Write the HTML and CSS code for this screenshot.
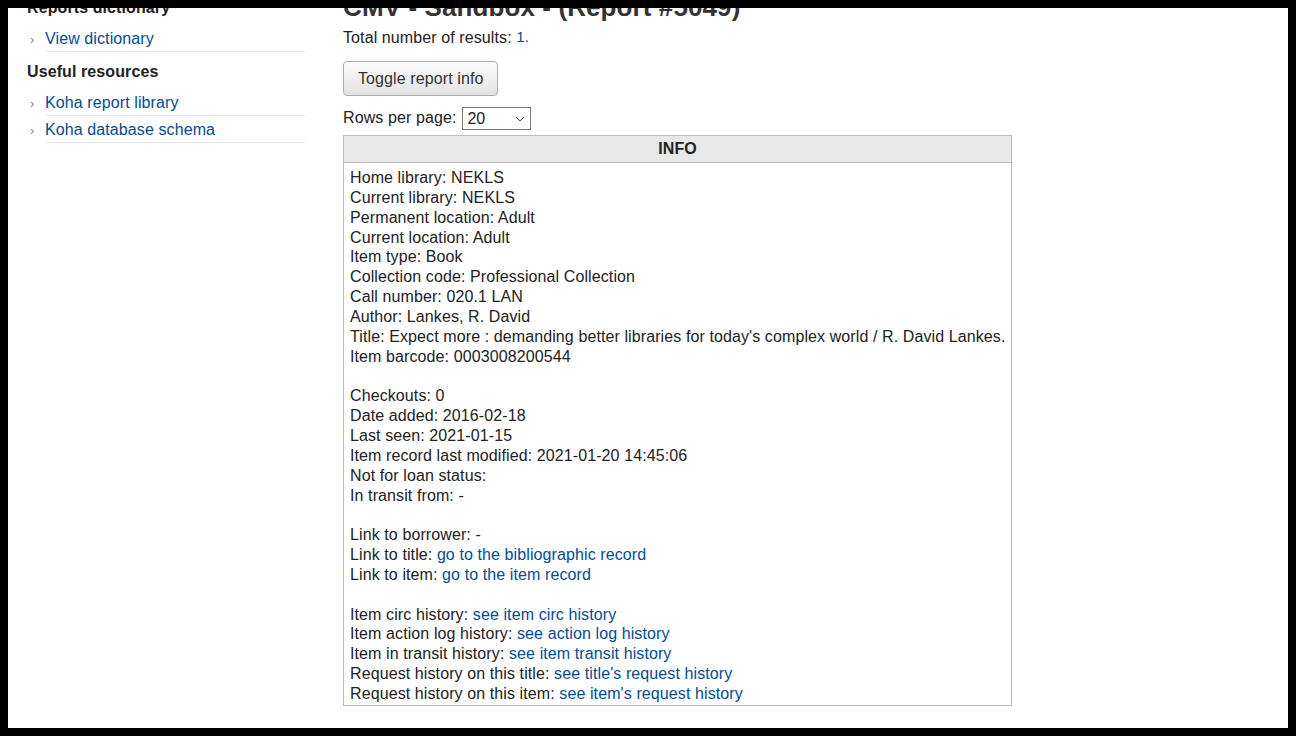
FILE: index.html
```html
<!DOCTYPE html>
<html>
<head>
<meta charset="utf-8">
<link rel="stylesheet" href="styles.css">
</head>
<body>
<div class="viewport">
  <div class="page">
    <aside class="sidebar">
      <h5 class="side-head first">Reports dictionary</h5>
      <ul class="side-list">
        <li><a href="#">View dictionary</a></li>
      </ul>
      <h5 class="side-head">Useful resources</h5>
      <ul class="side-list">
        <li><a href="#">Koha report library</a></li>
        <li><a href="#">Koha database schema</a></li>
      </ul>
    </aside>
    <main class="main">
      <h1 class="title">CMV - Sandbox - (Report #5049)</h1>
      <p class="total">Total number of results: <span class="count">1.</span></p>
      <button class="toggle">Toggle report info</button>
      <div class="rows">Rows per page:
        <span class="select-wrap">
          <select class="rows-select"><option>20</option></select>
          <svg class="chev" width="10" height="6" viewBox="0 0 10 6"><path d="M1 1 L5 5 L9 1" fill="none" stroke="#555" stroke-width="1"/></svg>
        </span>
      </div>
      <table class="info">
        <thead><tr><th>INFO</th></tr></thead>
        <tbody><tr><td>
          Home library: NEKLS<br>
          Current library: NEKLS<br>
          Permanent location: Adult<br>
          Current location: Adult<br>
          Item type: Book<br>
          Collection code: Professional Collection<br>
          Call number: 020.1 LAN<br>
          Author: Lankes, R. David<br>
          Title: Expect more : demanding better libraries for today's complex world / R. David Lankes.<br>
          Item barcode: 0003008200544<br>
          <br>
          Checkouts: 0<br>
          Date added: 2016-02-18<br>
          Last seen: 2021-01-15<br>
          Item record last modified: 2021-01-20 14:45:06<br>
          Not for loan status: <br>
          In transit from: -<br>
          <br>
          Link to borrower: -<br>
          Link to title: <a href="#">go to the bibliographic record</a><br>
          Link to item: <a href="#">go to the item record</a><br>
          <br>
          Item circ history: <a href="#">see item circ history</a><br>
          Item action log history: <a href="#">see action log history</a><br>
          Item in transit history: <a href="#">see item transit history</a><br>
          Request history on this title: <a href="#">see title's request history</a><br>
          Request history on this item: <a href="#">see item's request history</a>
        </td></tr></tbody>
      </table>
    </main>
  </div>
</div>
</body>
</html>
```

FILE: styles.css
```css
html, body {
  margin: 0;
  padding: 0;
  background: #000;
}
body {
  font-family: "Liberation Sans", Arial, sans-serif;
  color: #222;
  letter-spacing: 0.1px;
}
a {
  color: #004d99;
  text-decoration: none;
}
.viewport {
  margin: 8px;
  width: 1280px;
  height: 720px;
  overflow: hidden;
  background: #fff;
}
.page {
  display: grid;
  grid-template-columns: 335px 1fr;
  margin-top: -16px;
}
.sidebar {
  padding-left: 19px;
  padding-top: 6px;
  width: 278px;
}
.side-head {
  margin: 10px 0 7px;
  font-size: 16px;
  font-weight: bold;
  color: #222;
  line-height: 20px;
}
.side-head.first {
  margin-top: 0;
}
.side-list {
  list-style: none;
  margin: 0 0 0 18px;
  padding: 0;
}
.side-list li {
  position: relative;
  border-bottom: 1px solid #e8e8e8;
  font-size: 16px;
  line-height: 19px;
  padding: 4px 0 3px;
}
.side-list li::before {
  content: "›";
  position: absolute;
  left: -15px;
  top: 5px;
  color: #888;
  font-size: 13px;
}
.main {
  display: flex;
  flex-direction: column;
  align-items: flex-start;
}
.title {
  margin: 0;
  font-size: 26px;
  line-height: 30px;
  font-weight: bold;
  color: #333;
}
.total {
  margin: 5px 0 0;
  font-size: 16px;
  line-height: 20px;
}
.count {
  color: #004d99;
  font-size: 15px;
  vertical-align: 1px;
}
.toggle {
  margin-top: 13px;
  height: 35px;
  padding: 0 14px;
  font-family: inherit;
  font-size: 16px;
  letter-spacing: 0.1px;
  color: #333;
  border: 1px solid #adadad;
  border-radius: 4px;
  background: linear-gradient(#fafafa, #e4e4e4);
}
.rows {
  margin-top: 10px;
  font-size: 16px;
  line-height: 24px;
  display: flex;
  align-items: center;
}
.select-wrap {
  position: relative;
  display: inline-block;
  margin-left: 6px;
  height: 23px;
}
.rows-select {
  appearance: none;
  -webkit-appearance: none;
  width: 69px;
  height: 23px;
  font-family: inherit;
  font-size: 16px;
  color: #222;
  border: 1px solid #767676;
  border-radius: 0;
  background: #fff;
  padding: 0 4px;
  display: block;
}
.chev {
  position: absolute;
  right: 6px;
  top: 9px;
  pointer-events: none;
}
.info {
  margin-top: 5px;
  border-collapse: collapse;
  table-layout: fixed;
  width: 669px;
  font-size: 16px;
}
.info th {
  background: #e8e8e8;
  border: 1px solid #bcbcbc;
  height: 26px;
  padding: 0;
  font-weight: bold;
  font-size: 16px;
  color: #222;
}
.info td {
  border: 1px solid #bcbcbc;
  padding: 5px 6px 1px;
  line-height: 19.85px;
  text-align: left;
  white-space: nowrap;
}
```
